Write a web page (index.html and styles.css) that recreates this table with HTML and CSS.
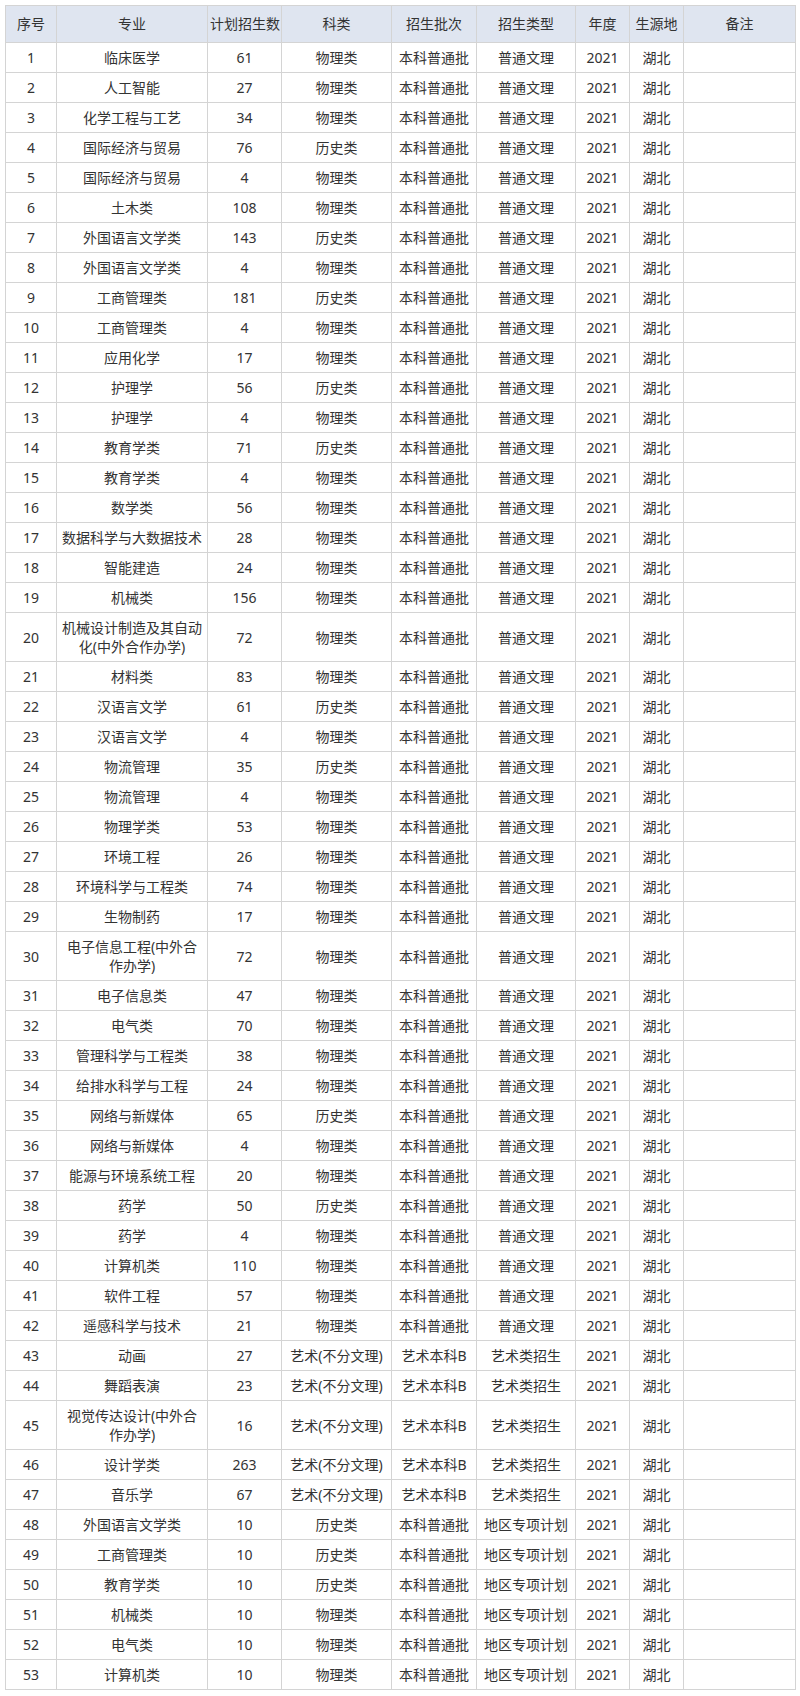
FILE: index.html
```html
<!DOCTYPE html>
<html lang="zh-CN">
<head>
<meta charset="utf-8">
<title>招生计划</title>
<link rel="stylesheet" href="styles.css">
</head>
<body>
<table class="plan">
<colgroup>
<col class="c1"><col class="c2"><col class="c3"><col class="c4"><col class="c5"><col class="c6"><col class="c7"><col class="c8"><col class="c9">
</colgroup>
<thead>
<tr><th>序号</th><th>专业</th><th>计划招生数</th><th>科类</th><th>招生批次</th><th>招生类型</th><th>年度</th><th>生源地</th><th>备注</th></tr>
</thead>
<tbody>
<tr><td>1</td><td>临床医学</td><td>61</td><td>物理类</td><td>本科普通批</td><td>普通文理</td><td>2021</td><td>湖北</td><td></td></tr>
<tr><td>2</td><td>人工智能</td><td>27</td><td>物理类</td><td>本科普通批</td><td>普通文理</td><td>2021</td><td>湖北</td><td></td></tr>
<tr><td>3</td><td>化学工程与工艺</td><td>34</td><td>物理类</td><td>本科普通批</td><td>普通文理</td><td>2021</td><td>湖北</td><td></td></tr>
<tr><td>4</td><td>国际经济与贸易</td><td>76</td><td>历史类</td><td>本科普通批</td><td>普通文理</td><td>2021</td><td>湖北</td><td></td></tr>
<tr><td>5</td><td>国际经济与贸易</td><td>4</td><td>物理类</td><td>本科普通批</td><td>普通文理</td><td>2021</td><td>湖北</td><td></td></tr>
<tr><td>6</td><td>土木类</td><td>108</td><td>物理类</td><td>本科普通批</td><td>普通文理</td><td>2021</td><td>湖北</td><td></td></tr>
<tr><td>7</td><td>外国语言文学类</td><td>143</td><td>历史类</td><td>本科普通批</td><td>普通文理</td><td>2021</td><td>湖北</td><td></td></tr>
<tr><td>8</td><td>外国语言文学类</td><td>4</td><td>物理类</td><td>本科普通批</td><td>普通文理</td><td>2021</td><td>湖北</td><td></td></tr>
<tr><td>9</td><td>工商管理类</td><td>181</td><td>历史类</td><td>本科普通批</td><td>普通文理</td><td>2021</td><td>湖北</td><td></td></tr>
<tr><td>10</td><td>工商管理类</td><td>4</td><td>物理类</td><td>本科普通批</td><td>普通文理</td><td>2021</td><td>湖北</td><td></td></tr>
<tr><td>11</td><td>应用化学</td><td>17</td><td>物理类</td><td>本科普通批</td><td>普通文理</td><td>2021</td><td>湖北</td><td></td></tr>
<tr><td>12</td><td>护理学</td><td>56</td><td>历史类</td><td>本科普通批</td><td>普通文理</td><td>2021</td><td>湖北</td><td></td></tr>
<tr><td>13</td><td>护理学</td><td>4</td><td>物理类</td><td>本科普通批</td><td>普通文理</td><td>2021</td><td>湖北</td><td></td></tr>
<tr><td>14</td><td>教育学类</td><td>71</td><td>历史类</td><td>本科普通批</td><td>普通文理</td><td>2021</td><td>湖北</td><td></td></tr>
<tr><td>15</td><td>教育学类</td><td>4</td><td>物理类</td><td>本科普通批</td><td>普通文理</td><td>2021</td><td>湖北</td><td></td></tr>
<tr><td>16</td><td>数学类</td><td>56</td><td>物理类</td><td>本科普通批</td><td>普通文理</td><td>2021</td><td>湖北</td><td></td></tr>
<tr><td>17</td><td>数据科学与大数据技术</td><td>28</td><td>物理类</td><td>本科普通批</td><td>普通文理</td><td>2021</td><td>湖北</td><td></td></tr>
<tr><td>18</td><td>智能建造</td><td>24</td><td>物理类</td><td>本科普通批</td><td>普通文理</td><td>2021</td><td>湖北</td><td></td></tr>
<tr><td>19</td><td>机械类</td><td>156</td><td>物理类</td><td>本科普通批</td><td>普通文理</td><td>2021</td><td>湖北</td><td></td></tr>
<tr><td>20</td><td>机械设计制造及其自动化(中外合作办学)</td><td>72</td><td>物理类</td><td>本科普通批</td><td>普通文理</td><td>2021</td><td>湖北</td><td></td></tr>
<tr><td>21</td><td>材料类</td><td>83</td><td>物理类</td><td>本科普通批</td><td>普通文理</td><td>2021</td><td>湖北</td><td></td></tr>
<tr><td>22</td><td>汉语言文学</td><td>61</td><td>历史类</td><td>本科普通批</td><td>普通文理</td><td>2021</td><td>湖北</td><td></td></tr>
<tr><td>23</td><td>汉语言文学</td><td>4</td><td>物理类</td><td>本科普通批</td><td>普通文理</td><td>2021</td><td>湖北</td><td></td></tr>
<tr><td>24</td><td>物流管理</td><td>35</td><td>历史类</td><td>本科普通批</td><td>普通文理</td><td>2021</td><td>湖北</td><td></td></tr>
<tr><td>25</td><td>物流管理</td><td>4</td><td>物理类</td><td>本科普通批</td><td>普通文理</td><td>2021</td><td>湖北</td><td></td></tr>
<tr><td>26</td><td>物理学类</td><td>53</td><td>物理类</td><td>本科普通批</td><td>普通文理</td><td>2021</td><td>湖北</td><td></td></tr>
<tr><td>27</td><td>环境工程</td><td>26</td><td>物理类</td><td>本科普通批</td><td>普通文理</td><td>2021</td><td>湖北</td><td></td></tr>
<tr><td>28</td><td>环境科学与工程类</td><td>74</td><td>物理类</td><td>本科普通批</td><td>普通文理</td><td>2021</td><td>湖北</td><td></td></tr>
<tr><td>29</td><td>生物制药</td><td>17</td><td>物理类</td><td>本科普通批</td><td>普通文理</td><td>2021</td><td>湖北</td><td></td></tr>
<tr><td>30</td><td>电子信息工程(中外合作办学)</td><td>72</td><td>物理类</td><td>本科普通批</td><td>普通文理</td><td>2021</td><td>湖北</td><td></td></tr>
<tr><td>31</td><td>电子信息类</td><td>47</td><td>物理类</td><td>本科普通批</td><td>普通文理</td><td>2021</td><td>湖北</td><td></td></tr>
<tr><td>32</td><td>电气类</td><td>70</td><td>物理类</td><td>本科普通批</td><td>普通文理</td><td>2021</td><td>湖北</td><td></td></tr>
<tr><td>33</td><td>管理科学与工程类</td><td>38</td><td>物理类</td><td>本科普通批</td><td>普通文理</td><td>2021</td><td>湖北</td><td></td></tr>
<tr><td>34</td><td>给排水科学与工程</td><td>24</td><td>物理类</td><td>本科普通批</td><td>普通文理</td><td>2021</td><td>湖北</td><td></td></tr>
<tr><td>35</td><td>网络与新媒体</td><td>65</td><td>历史类</td><td>本科普通批</td><td>普通文理</td><td>2021</td><td>湖北</td><td></td></tr>
<tr><td>36</td><td>网络与新媒体</td><td>4</td><td>物理类</td><td>本科普通批</td><td>普通文理</td><td>2021</td><td>湖北</td><td></td></tr>
<tr><td>37</td><td>能源与环境系统工程</td><td>20</td><td>物理类</td><td>本科普通批</td><td>普通文理</td><td>2021</td><td>湖北</td><td></td></tr>
<tr><td>38</td><td>药学</td><td>50</td><td>历史类</td><td>本科普通批</td><td>普通文理</td><td>2021</td><td>湖北</td><td></td></tr>
<tr><td>39</td><td>药学</td><td>4</td><td>物理类</td><td>本科普通批</td><td>普通文理</td><td>2021</td><td>湖北</td><td></td></tr>
<tr><td>40</td><td>计算机类</td><td>110</td><td>物理类</td><td>本科普通批</td><td>普通文理</td><td>2021</td><td>湖北</td><td></td></tr>
<tr><td>41</td><td>软件工程</td><td>57</td><td>物理类</td><td>本科普通批</td><td>普通文理</td><td>2021</td><td>湖北</td><td></td></tr>
<tr><td>42</td><td>遥感科学与技术</td><td>21</td><td>物理类</td><td>本科普通批</td><td>普通文理</td><td>2021</td><td>湖北</td><td></td></tr>
<tr><td>43</td><td>动画</td><td>27</td><td>艺术(不分文理)</td><td>艺术本科B</td><td>艺术类招生</td><td>2021</td><td>湖北</td><td></td></tr>
<tr><td>44</td><td>舞蹈表演</td><td>23</td><td>艺术(不分文理)</td><td>艺术本科B</td><td>艺术类招生</td><td>2021</td><td>湖北</td><td></td></tr>
<tr><td>45</td><td>视觉传达设计(中外合作办学)</td><td>16</td><td>艺术(不分文理)</td><td>艺术本科B</td><td>艺术类招生</td><td>2021</td><td>湖北</td><td></td></tr>
<tr><td>46</td><td>设计学类</td><td>263</td><td>艺术(不分文理)</td><td>艺术本科B</td><td>艺术类招生</td><td>2021</td><td>湖北</td><td></td></tr>
<tr><td>47</td><td>音乐学</td><td>67</td><td>艺术(不分文理)</td><td>艺术本科B</td><td>艺术类招生</td><td>2021</td><td>湖北</td><td></td></tr>
<tr><td>48</td><td>外国语言文学类</td><td>10</td><td>历史类</td><td>本科普通批</td><td>地区专项计划</td><td>2021</td><td>湖北</td><td></td></tr>
<tr><td>49</td><td>工商管理类</td><td>10</td><td>历史类</td><td>本科普通批</td><td>地区专项计划</td><td>2021</td><td>湖北</td><td></td></tr>
<tr><td>50</td><td>教育学类</td><td>10</td><td>历史类</td><td>本科普通批</td><td>地区专项计划</td><td>2021</td><td>湖北</td><td></td></tr>
<tr><td>51</td><td>机械类</td><td>10</td><td>物理类</td><td>本科普通批</td><td>地区专项计划</td><td>2021</td><td>湖北</td><td></td></tr>
<tr><td>52</td><td>电气类</td><td>10</td><td>物理类</td><td>本科普通批</td><td>地区专项计划</td><td>2021</td><td>湖北</td><td></td></tr>
<tr><td>53</td><td>计算机类</td><td>10</td><td>物理类</td><td>本科普通批</td><td>地区专项计划</td><td>2021</td><td>湖北</td><td></td></tr>
</tbody>
</table>
</body>
</html>
```

FILE: styles.css
```css
html, body {
  margin: 0;
  padding: 0;
  background: #ffffff;
}

body {
  padding: 5px;
  font-family: "Noto Sans", "Noto Sans CJK SC", sans-serif;
  font-size: 14px;
  color: #333333;
}

.plan {
  width: 790px;
  table-layout: fixed;
  border-collapse: collapse;
  border: 1px solid #d4d4d4;
}

.plan .c1 { width: 51px; }
.plan .c2 { width: 151px; }
.plan .c3 { width: 74px; }
.plan .c4 { width: 110px; }
.plan .c5 { width: 85px; }
.plan .c6 { width: 99px; }
.plan .c7 { width: 54px; }
.plan .c8 { width: 54px; }
.plan .c9 { width: 112px; }

.plan th,
.plan td {
  border: 1px solid #d4d4d4;
  text-align: center;
  vertical-align: middle;
  font-weight: normal;
  line-height: 19px;
  padding: 5px 4px;
  word-break: break-all;
}

.plan th {
  background: #dfe5f0;
  padding: 8px 2px;
  line-height: 20px;
  white-space: nowrap;
}

.plan td {
  height: 19px;
}
```
